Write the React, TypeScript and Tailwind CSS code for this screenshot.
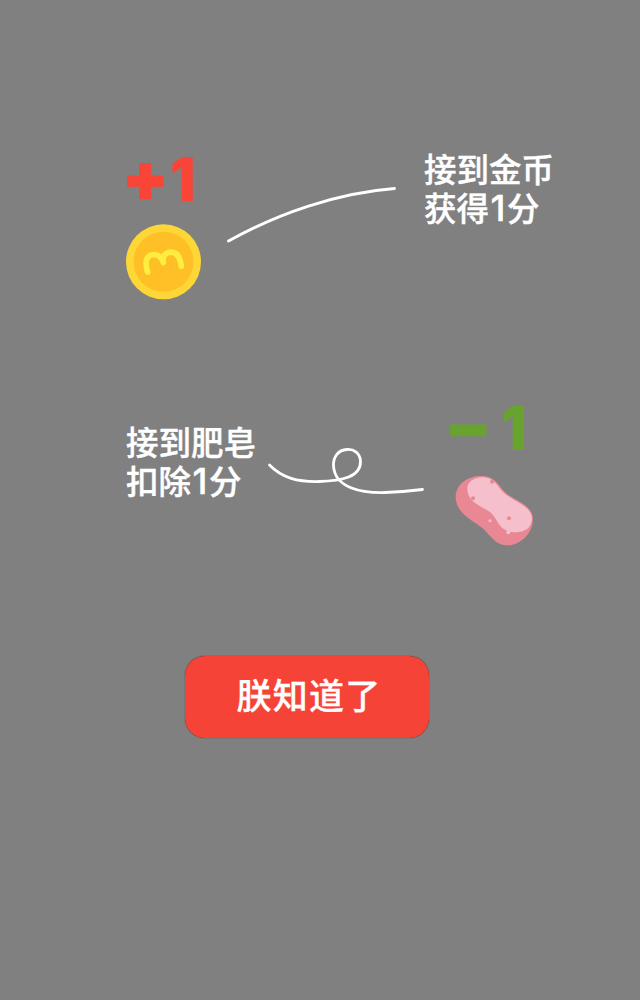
const lineText =
  "whitespace-nowrap font-['Liberation_Sans','Noto_Sans_CJK_SC',sans-serif] text-[32.5px] leading-[39px] font-medium text-white [-webkit-text-stroke:0.4px_white]";
const digit =
  "inline-block h-[30px] w-[18px] text-center align-baseline font-['Inter',sans-serif] text-[36px] leading-[30px] font-medium";

function Coin() {
  return (
    <svg className="block" width="76" height="76" viewBox="48 252.500 228 228" fill="none">
      <circle cx="160.500" cy="366" r="112.500" fill="#fdd736" />
      <circle cx="160.500" cy="366" r="90" fill="#fec026" />
      <path
        d="M113 397C104 369 107 353 122 346C140 340 155 349 160 368C155 348 168 337 183 337C201 337 211 353 214 380"
        stroke="#ffee3d"
        strokeWidth="17"
        strokeLinecap="round"
        strokeLinejoin="round"
      />
    </svg>
  );
}

function Soap() {
  return (
    <svg className="block" width="78" height="71" viewBox="60 255 234 213">
      <path
        d="M62 321C63 282 98 258 139 258C180 258 188 284 212 308C236 331 293 344 294 387C293 433 254 466 217 466C178 465 167 434 141 413C113 391 62 369 62 321Z"
        fill="#e98894"
      />
      <path
        d="M97 299C95 277 116 263 139 262C171 261 182 279 198 300C223 331 291 346 291 385C290 414 269 427 243 427C189 426 190 386 165 366C138 348 99 336 97 299Z"
        fill="#f5bfcb"
      />
      <circle cx="171" cy="275" r="6" fill="#e98894" />
      <circle cx="114" cy="325" r="6" fill="#e98894" />
      <circle cx="222" cy="385" r="6" fill="#e98894" />
      <circle cx="165" cy="392" r="4.500" fill="#f5bfcb" />
      <circle cx="220" cy="427" r="6" fill="#f5bfcb" />
    </svg>
  );
}

export default function App() {
  return (
    <main className="flex h-[1000px] w-[640px] flex-col bg-[#808080] pt-[150px]">
      <section className="flex h-[250px] pl-[126px]">
        <div className="w-[101px]">
          <div className="flex h-[74px] font-['Inter',sans-serif] font-black text-[#f84537]">
            <span className="-ml-[4px] w-[48px] text-[67px] leading-[54px] [-webkit-text-stroke:1px_#f84537]">+</span>
            <span className="origin-left scale-x-[0.92] text-[61px] leading-[58px]">1</span>
          </div>
          <Coin />
        </div>
        <svg className="mt-[35px] block" width="170" height="60" viewBox="227 185 170 60" fill="none">
          <path d="M228.500 241C277 214 336 193 394.500 188.500" stroke="#fff" strokeWidth="2.800" strokeLinecap="round" />
        </svg>
        <p className={`mt-[2px] ml-[27px] ${lineText}`}>
          接到金币
          <br />
          获得<span className={digit}>1</span>分
        </p>
      </section>
      <section className="flex h-[256px] pl-[126px]">
        <p className={`mt-[25px] w-[141px] ${lineText}`}>
          接到肥皂
          <br />
          扣除<span className={digit}>1</span>分
        </p>
        <svg className="mt-[45px] block" width="160" height="52" viewBox="267 445 160 52" fill="none">
          <path
            d="M269.500 465C282 478 298 482 319 481.500C342 481 361 477 360.500 461C360 453 354 449 347 449.500C338 450 333 457 333.500 466C335 488 361 493 385 492.500C400 492 410 491 422.500 489.500"
            stroke="#fff"
            strokeWidth="2.800"
            strokeLinecap="round"
          />
        </svg>
        <div className="ml-[22px]">
          <div className="flex h-[75px] font-['Inter',sans-serif] font-black text-[#68a22f]">
            <span className="-ml-[4px] w-[56px] text-[67px] leading-[51px] [-webkit-text-stroke:1px_#68a22f]">−</span>
            <span className="origin-left scale-x-[0.92] text-[61px] leading-[56px]">1</span>
          </div>
          <div className="pl-[6px]">
            <Soap />
          </div>
        </div>
      </section>
      <button className="ml-[185px] h-[82px] w-[244px] rounded-[20px] bg-[#f64337] pt-[1px] pl-[4px] font-['Liberation_Sans','Noto_Sans_CJK_SC',sans-serif] text-[35px] font-medium tracking-[1.2px] text-white shadow-[0_0_1px_#3a1512] [-webkit-text-stroke:0.3px_white]">
        朕知道了
      </button>
    </main>
  );
}
